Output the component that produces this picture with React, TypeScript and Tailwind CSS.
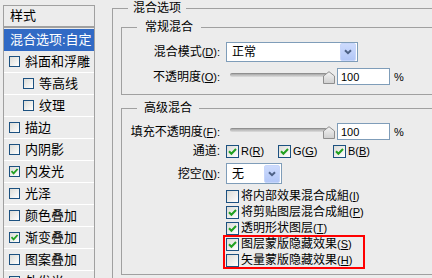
import React from "react";

function Check({ small }: { small?: boolean }) {
  return small ? (
    <svg width="9" height="9" viewBox="0 0 9 9" className="absolute left-0 top-0">
      <path d="M1.5 4.2 L3.6 6.4 L7.6 2" stroke="#21a121" strokeWidth="1.8" fill="none" />
    </svg>
  ) : (
    <svg width="11" height="11" viewBox="0 0 11 11" className="absolute left-0 top-0">
      <path d="M2 5.3 L4.4 7.8 L9 3" stroke="#21a121" strokeWidth="2" fill="none" />
    </svg>
  );
}

function Box({ checked, small }: { checked?: boolean; small?: boolean }) {
  return (
    <span
      className={`relative block shrink-0 border border-[#1c5180] bg-[linear-gradient(135deg,#dcdcd7,#ffffff)] ${
        small ? "h-[11px] w-[11px]" : "h-[13px] w-[13px]"
      }`}
    >
      {checked && <Check small={small} />}
    </span>
  );
}

function Chevron() {
  return (
    <span className="ml-auto mr-[1px] flex h-[18px] w-[16px] shrink-0 items-center justify-center rounded-[2px] border border-[#c7d6fb] bg-[linear-gradient(#cddbfd,#b3c7f7)]">
      <svg width="8" height="6" viewBox="0 0 8 6">
        <path d="M1 1.2 L4 4.2 L7 1.2" stroke="#4d6185" strokeWidth="2" fill="none" />
      </svg>
    </span>
  );
}

function Label({ cn, k }: { cn: string; k: string }) {
  return (
    <span className="block w-[98px] shrink-0 text-right">
      {cn}
      <span className="text-[11px]">
        (<span className="underline">{k}</span>):
      </span>
    </span>
  );
}

function Slider() {
  return (
    <span className="relative ml-[6px] block h-[17px] w-[108px] shrink-0">
      <span className="absolute left-[4px] top-[5px] block h-[4px] w-[97px] rounded-[2px] border-t border-[#8f8f8f] bg-[linear-gradient(#a9a9a9,#dedede)]" />
      <svg width="12" height="13" viewBox="0 0 12 13" className="absolute left-[97px] top-[3px]">
        <defs>
          <linearGradient id="tg" x1="0" y1="0" x2="0" y2="1">
            <stop offset="0" stopColor="#f4f4f4" />
            <stop offset="1" stopColor="#cfcfcf" />
          </linearGradient>
        </defs>
        <path d="M0.5 5 L6 0.7 L11.5 5 L11.5 12.5 L0.5 12.5 Z" fill="url(#tg)" stroke="#8e8e8e" strokeWidth="1" />
      </svg>
    </span>
  );
}

function Num() {
  return (
    <>
      <span className="ml-[3px] flex h-[17px] w-[53px] shrink-0 items-center border border-[#7f9db9] bg-white pl-[3px] text-[11px]">
        100
      </span>
      <span className="ml-[4px] text-[11px]">%</span>
    </>
  );
}

const leftRows: { t: string; ind?: boolean; c?: boolean }[] = [
  { t: "斜面和浮雕" },
  { t: "等高线", ind: true },
  { t: "纹理", ind: true },
  { t: "描边" },
  { t: "内阴影" },
  { t: "内发光", c: true },
  { t: "光泽" },
  { t: "颜色叠加" },
  { t: "渐变叠加", c: true },
  { t: "图案叠加" },
  { t: "外发光" },
];

function ListRow({ c, t, k }: { c?: boolean; t: string; k: string }) {
  return (
    <div className="flex h-[16px] items-center gap-[2px]">
      <Box checked={c} />
      <span>
        {t}
        <span className="text-[11px]">
          (<span className="underline">{k}</span>)
        </span>
      </span>
    </div>
  );
}

export default function App() {
  return (
    <div className="flex h-[278px] w-[432px] items-start overflow-hidden bg-[#ececec] font-[family-name:'Liberation_Sans','Noto_Sans_CJK_SC',sans-serif] text-[12px] leading-4 text-black">
      {/* left styles list */}
      <div className="ml-[3px] mt-[5px] w-[92px] shrink-0 border border-[#a0a0a0] text-[13px]">
        <div className="flex h-[22px] items-center border-b-2 border-[#a0a0a0] pl-[6px]">样式</div>
        <div className="mt-[1px] flex h-[22px] items-center bg-[#316ac5] pl-[6px] text-white">混合选项:自定</div>
        {leftRows.map((r) => (
          <div
            key={r.t}
            className={`flex h-[22px] items-center gap-[5px] border-b border-white ${r.ind ? "pl-[19px]" : "pl-[5px]"}`}
          >
            <Box small checked={r.c} />
            <span>{r.t}</span>
          </div>
        ))}
      </div>

      {/* right options */}
      <fieldset className="ml-[17px] w-[340px] shrink-0 border border-[#a0a0a0]">
        <legend className="ml-[15px] px-[5px] leading-4">混合选项</legend>
        <div className="pb-[20px] pl-[8px] pt-[3px]">
          <fieldset className="w-[330px] border border-[#a0a0a0]">
            <legend className="ml-[15px] px-[8px] leading-4">常规混合</legend>
            <div className="pb-[9px] pt-[7px]">
              <div className="flex h-[20px] items-center">
                <Label cn="混合模式" k="D" />
                <span className="ml-[6px] flex h-[20px] w-[132px] items-center border border-[#7f9db9] bg-white pl-[5px]">
                  <span>正常</span>
                  <Chevron />
                </span>
              </div>
              <div className="mt-[6px] flex h-[17px] items-center">
                <Label cn="不透明度" k="O" />
                <Slider />
                <Num />
              </div>
            </div>
          </fieldset>

          <fieldset className="mt-[5px] w-[330px] border border-[#a0a0a0]">
            <legend className="ml-[15px] px-[7px] leading-4">高级混合</legend>
            <div className="pb-[6px] pt-[7px]">
              <div className="flex h-[17px] items-center">
                <Label cn="填充不透明度" k="F" />
                <Slider />
                <Num />
              </div>
              <div className="mt-[3px] flex h-[16px] items-center">
                <span className="block w-[98px] shrink-0 text-right">通道:</span>
                <div className="ml-[6px] flex w-[52px] items-center gap-[2px]">
                  <Box checked />
                  <span className="text-[11px]">
                    R(<span className="underline">R</span>)
                  </span>
                </div>
                <div className="flex w-[55px] items-center gap-[2px]">
                  <Box checked />
                  <span className="text-[11px]">
                    G(<span className="underline">G</span>)
                  </span>
                </div>
                <div className="flex items-center gap-[2px]">
                  <Box checked />
                  <span className="text-[11px]">
                    B(<span className="underline">B</span>)
                  </span>
                </div>
              </div>
              <div className="mt-[4px] flex h-[21px] items-center">
                <Label cn="挖空" k="N" />
                <span className="ml-[6px] flex h-[21px] w-[56px] items-center border border-[#7f9db9] bg-white pl-[5px]">
                  <span>无</span>
                  <Chevron />
                </span>
              </div>
              <div className="ml-[104px] mt-[4px]">
                <ListRow t="将内部效果混合成組" k="I" />
                <ListRow c t="将剪贴图层混合成組" k="P" />
                <ListRow c t="透明形状图层" k="T" />
                <div className="relative">
                  <ListRow c t="图层蒙版隐藏效果" k="S" />
                  <ListRow t="矢量蒙版隐藏效果" k="H" />
                  <span className="absolute left-[-3px] top-[-1px] block h-[34px] w-[142px] border-2 border-[#ff0000]" />
                </div>
              </div>
            </div>
          </fieldset>
        </div>
      </fieldset>
    </div>
  );
}
